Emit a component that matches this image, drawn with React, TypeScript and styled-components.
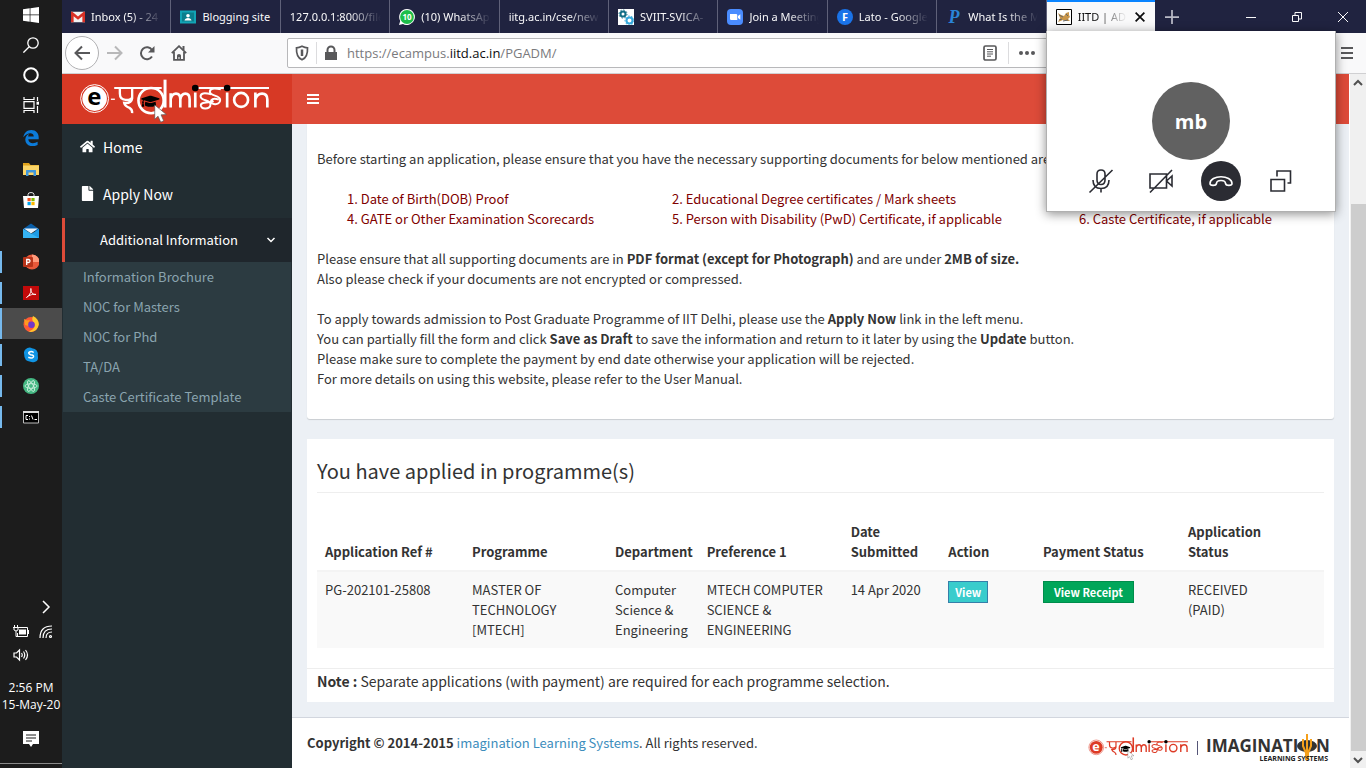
import React from 'react';
import styled, { createGlobalStyle, css } from 'styled-components';
import { FaFile, FaHome, FaGraduationCap } from 'react-icons/fa';

const siteFont = '"Noto Sans CJK SC", "Noto Sans", sans-serif';
const chromeFont = '"Open Sans", "Noto Sans", sans-serif';

const GlobalStyle = createGlobalStyle`
  *, *::before, *::after { box-sizing: border-box; }
  body { margin: 0; overflow: hidden; font-family: ${chromeFont}; }
  button { font: inherit; color: inherit; margin: 0; padding: 0; border: 0; background: none; }
  a { color: inherit; text-decoration: none; }
  ul, ol { list-style: none; margin: 0; padding: 0; }
  h2, p { margin: 0; font-weight: 400; }
  svg { display: block; flex: none; }
`;

/* ---------- Desktop ---------- */

const Desktop = styled.div`
  display: flex;
  position: relative;
  height: 100vh;
`;

const Taskbar = styled.nav`
  display: flex;
  flex-direction: column;
  flex: none;
  width: 62px;
  padding-bottom: 4px;
  background: #1c1c1c;
  color: #fff;
`;

const TaskGroup = styled.div`
  display: flex;
  flex-direction: column;
  margin-bottom: 2px;
`;

const TaskButton = styled.button<{ $tall?: boolean; $open?: boolean; $active?: boolean }>`
  display: flex;
  align-items: center;
  justify-content: center;
  height: ${p => (p.$tall ? 31 : 30)}px;
  background: ${p => (p.$active ? '#4b4b4b' : 'transparent')};
  ${p =>
    p.$open &&
    css`
      &::before {
        content: '';
        width: 2px;
        height: ${p.$active ? 31 : 22}px;
        margin-right: auto;
        background: #76b9ed;
      }
      svg {
        margin-right: auto;
        margin-left: -2px;
      }
    `}
`;

const Tray = styled.div`
  display: grid;
  grid-template-columns: 1fr 1fr;
  row-gap: 8px;
  margin-top: auto;
  padding: 0 4px 0 9px;
  justify-items: center;
`;

const TrayButton = styled.button<{ $column?: number }>`
  height: 16px;
  ${p => p.$column && `grid-column: ${p.$column};`}
`;

const Clock = styled.button`
  margin: 16px 0;
  font-size: 12px;
  line-height: 17px;
  white-space: nowrap;
`;

const NoticeButton = styled.button`
  display: flex;
  justify-content: center;
  padding: 2px 0 16px;
  border-bottom: 1px solid #8a8a8a;
`;

/* ---------- Browser ---------- */

const Browser = styled.div`
  display: flex;
  flex-direction: column;
  flex: 1;
  min-width: 0;
`;

const TitleBar = styled.div`
  display: flex;
  height: 33px;
  background: #202340;
  color: #f9f9fa;
`;

const TabList = styled.div`
  display: flex;
  flex: 0 1 1093px;
  min-width: 0;
`;

const Tab = styled.div<{ $active?: boolean }>`
  display: flex;
  flex: 1 1 0;
  align-items: center;
  min-width: 0;
  gap: 6px;
  padding: 0 8px 0 9px;
  font-family: "Noto Sans", sans-serif;
  font-size: 11px;
  line-height: 33px;
  color: ${p => (p.$active ? '#0c0c0d' : '#f9f9fa')};
  background: ${p => (p.$active ? '#f9f9fa' : 'transparent')};
  box-shadow: ${p => (p.$active ? 'inset 0 2px #0a84ff' : 'none')};
  border-right: ${p => (p.$active ? 0 : 1)}px solid #5f6179;
`;

const TabTitle = styled.span<{ $full?: boolean }>`
  flex: 1;
  min-width: 0;
  overflow: hidden;
  white-space: nowrap;
  ${p => !p.$full && 'mask-image: linear-gradient(to left, transparent, #000 32px);'}
`;

const NewTab = styled.button`
  display: grid;
  place-items: center;
  width: 34px;
  color: #b9bac6;
`;

const WindowButtons = styled.div`
  display: flex;
  margin-left: auto;
`;

const WindowButton = styled.button`
  display: grid;
  place-items: center;
  width: 46px;
`;

const Toolbar = styled.div`
  display: flex;
  align-items: center;
  height: 41px;
  padding: 0 13px 0 3px;
  background: #f9f9fa;
  border-bottom: 1px solid #d0d0d2;
  color: #58585a;
`;

const ToolButton = styled.button<{ $faded?: boolean }>`
  display: grid;
  place-items: center;
  width: 32px;
  height: 32px;
  opacity: ${p => (p.$faded ? 0.4 : 1)};
`;

const BackButton = styled(ToolButton)`
  width: 34px;
  height: 34px;
  border: 1px solid #b1b1b3;
  border-radius: 50%;
  background: #fff;
`;

const UrlBar = styled.div`
  display: flex;
  flex: 1;
  align-items: center;
  height: 30px;
  margin: 0 8px 0 92px;
  padding: 0 6px;
  border: 1px solid #b8b8ba;
  border-radius: 2px;
  background: #fff;
`;

const Divider = styled.i`
  width: 1px;
  height: 22px;
  margin: 0 6px;
  background: #dcdcde;
`;

const Url = styled.span`
  flex: 1;
  margin-left: 8px;
  font-size: 13px;
  color: #7a7a7d;
  b { font-weight: 400; color: #0c0c0d; }
`;

const UrlActions = styled.div`
  display: flex;
  align-items: center;
  gap: 4px;
  width: 344px;
`;

/* ---------- Page ---------- */

const Viewport = styled.div`
  display: flex;
  flex: 1;
  min-height: 0;
  font-family: ${siteFont};
  font-size: 13px;
  line-height: 20px;
  color: #333;
`;

const Site = styled.div`
  display: grid;
  grid-template-columns: 230px 1fr;
  grid-template-rows: 50px 1fr;
  flex: 1;
  min-width: 0;
`;

const Brand = styled.a`
  display: flex;
  align-items: center;
  padding: 2px 0 0 17px;
  background: #d73925;
`;

const Navbar = styled.header`
  display: flex;
  align-items: center;
  padding: 0 15px;
  background: #dd4b39;
  color: #fff;
`;

const Sidebar = styled.nav`
  background: #222d32;
  color: #fff;
`;

const MenuLink = styled.a`
  display: flex;
  align-items: center;
  gap: 8px;
  height: 47px;
  padding: 0 18px 2px;
  font-size: 14px;
`;

const MenuToggle = styled.button`
  display: flex;
  align-items: center;
  justify-content: space-between;
  width: 100%;
  height: 44px;
  padding: 0 16px 0 35px;
  border-left: 3px solid #dd4b39;
  background: #1f262c;
`;

const SubMenu = styled.ul`
  margin: 0 1px;
  background: #2c3b41;
`;

const SubLink = styled.a`
  display: block;
  padding: 5px 20px;
  color: #8aa4af;
`;

const Main = styled.div`
  display: flex;
  flex-direction: column;
  min-width: 0;
  background: #ecf0f5;
`;

const Cards = styled.main`
  display: flex;
  flex-direction: column;
  flex: 1;
  gap: 20px;
  padding: 0 15px 15px;
`;

const Instructions = styled.section`
  display: flex;
  flex-direction: column;
  gap: 20px;
  padding: 25px 10px 30px;
  border-radius: 0 0 3px 3px;
  background: #fff;
  box-shadow: 0 1px 1px rgba(0, 0, 0, 0.15);
`;

const DocumentList = styled.ol`
  display: grid;
  grid-template-columns: 325fr 407fr 245fr;
  padding-left: 30px;
  color: #800000;
`;

const DocumentItem = styled.li<{ $column: number }>`
  grid-column: ${p => p.$column};
  white-space: nowrap;
`;

const Applications = styled.section`
  padding-top: 20px;
  background: #fff;
`;

const CardBody = styled.div`
  padding: 0 10px;
`;

const CardTitle = styled.h2`
  margin-bottom: 21px;
  padding-bottom: 9px;
  border-bottom: 1px solid #eee;
  font-size: 20px;
  line-height: 24px;
`;

const Table = styled.table`
  width: 100%;
  table-layout: fixed;
  border-collapse: collapse;
`;

const Th = styled.th<{ $share: number }>`
  width: ${p => p.$share}%;
  padding: 8px 4px 8px 8px;
  border-bottom: 2px solid #f4f4f4;
  text-align: left;
  vertical-align: bottom;
`;

const Td = styled.td`
  padding: 8px 4px 8px 8px;
  background: #f9f9f9;
  vertical-align: top;
`;

const ActionButton = styled.button<{ $receipt?: boolean }>`
  display: block;
  height: 22px;
  margin-top: 1px;
  padding: 0 ${p => (p.$receipt ? 10 : 6)}px;
  border: 1px solid ${p => (p.$receipt ? '#008d4c' : '#367fa9')};
  background: ${p => (p.$receipt ? '#00a65a' : '#39cccc')};
  color: #fff;
  font-size: 11px;
  font-weight: 700;
  line-height: 20px;
`;

const Note = styled.p`
  margin-top: 20px;
  padding: 2px 10px 11px;
  border-top: 1px solid #eee;
  font-size: 14px;
`;

const Footer = styled.footer`
  display: flex;
  align-items: center;
  justify-content: space-between;
  height: 51px;
  padding: 0 19px 0 15px;
  border-top: 1px solid #d2d6de;
  background: #fff;
`;

const FooterLink = styled.a`
  color: #3c8dbc;
`;

const FooterLogos = styled.div`
  display: flex;
  align-items: center;
  gap: 8px;
  padding-top: 10px;
`;

const LogoRule = styled.i`
  width: 1px;
  height: 14px;
  background: #557;
`;

const ScrollTrack = styled.div`
  display: flex;
  flex-direction: column;
  flex: none;
  align-items: center;
  width: 17px;
  background: #f0f0f0;
  border-left: 1px solid #fff;
  color: #505050;
`;

const ScrollArrow = styled.button`
  display: grid;
  place-items: center;
  width: 100%;
  height: 17px;
`;

const ScrollSpace = styled.div`
  flex: 113;
`;

const ScrollThumb = styled.div`
  flex: 547;
  width: 15px;
  background: #cdcdcd;
`;

/* ---------- Call window ---------- */

const CallWindow = styled.aside`
  display: flex;
  flex-direction: column;
  align-items: center;
  position: absolute;
  top: 31px;
  right: 30px;
  width: 290px;
  height: 181px;
  padding: 51px 25px 0;
  border: 1px solid #b0b0b0;
  border-top: 0;
  background: #fff;
  box-shadow: 0 2px 10px rgba(0, 0, 0, 0.45);
`;

const Avatar = styled.div`
  display: grid;
  place-items: center;
  width: 78px;
  height: 78px;
  border-radius: 50%;
  background: #616161;
  color: #fff;
  font-size: 20px;
  font-weight: 700;
`;

const CallControls = styled.div`
  display: grid;
  grid-template-columns: repeat(4, 60px);
  justify-items: center;
  margin-top: 1px;
`;

const CallButton = styled.button<{ $filled?: boolean }>`
  display: grid;
  place-items: center;
  width: 40px;
  height: 40px;
  border-radius: 50%;
  color: ${p => (p.$filled ? '#fff' : '#2b2c33')};
  background: ${p => (p.$filled ? '#2b2c33' : 'transparent')};
`;

/* ---------- Drawings ---------- */

type IconProps = { size?: number; box?: number; children: React.ReactNode; stroke?: number };

const Icon = ({ size = 16, box = 16, stroke, children }: IconProps) => (
  <svg
    width={size}
    height={size}
    viewBox={`0 0 ${box} ${box}`}
    fill={stroke ? 'none' : 'currentColor'}
    stroke={stroke ? 'currentColor' : 'none'}
    strokeWidth={stroke}
    aria-hidden="true"
  >
    {children}
  </svg>
);

const AdmissionLogo = ({ width, reversed }: { width: number; reversed?: boolean }) => {
  const ink = reversed ? '#fff' : '#dd3b26';
  const inner = reversed ? '#000' : '#fff';
  return (
    <svg width={width} viewBox="26 10 578 140" role="img" aria-label="e-admission">
      <circle cx="73" cy="75" r="42" fill="none" stroke={ink} strokeWidth="3" />
      <circle cx="73" cy="75" r="37" fill={ink} />
      <text x="72" y="94" fontSize="72" fontWeight="700" textAnchor="middle" fill={inner} fontFamily="Open Sans, sans-serif">e</text>
      <path d="M122 77h12" stroke={ink} strokeWidth="4" />
      <g fill="none" stroke={ink} strokeWidth="8">
        <path d="M132 43H275M385 43H598" strokeWidth="6" />
        <path d="M149 44V60Q149 78 166 79Q184 80 186 70M186 44V74Q184 90 162 88Q164 97 178 103Q187 108 186 119" strokeWidth="7" />
        <circle cx="243" cy="81" r="38" />
        <path d="M285 18V102" strokeWidth="9" />
        <path d="M302 102V59M302 76Q306 60 318 60Q331 60 331 77V102M331 77Q334 60 346 60Q359 60 359 77V102" />
        <path d="M376 57V102M472 57V102" />
        <path d="M424 62Q392 54 392 68C392 84 422 76 422 92C422 111 388 107 393 93C398 83 415 91 431 82M453 47Q420 40 420 54C420 70 451 62 451 79C451 98 418 94 424 80Q430 72 447 78" strokeWidth="6" />
        <ellipse cx="514" cy="79" rx="21" ry="21" />
        <path d="M557 102V57M557 77Q562 60 577 60Q593 60 593 78V102" />
      </g>
      <circle cx="376" cy="43" r="10" />
      <circle cx="472" cy="43" r="10" />
      <g transform="translate(213 55)"><FaGraduationCap size={56} color="#000" /></g>
      <path d="M254 94V137L264 128L272 146L281 142L273 124L289 123Z" fill="#fff" stroke="#555" strokeWidth="2" />
    </svg>
  );
};

const ImaginationLogo = () => (
  <svg width="124" height="29" viewBox="0 0 124 29" role="img" aria-label="Imagination Learning Systems" fontFamily="Open Sans, sans-serif" fontWeight="700">
    <text x="0" y="18" fontSize="17" fill="#333">IMAGINATI</text>
    <ellipse cx="101" cy="12" rx="10" ry="6" fill="#333" />
    <path d="M97 5V12L100 19V25H102V19L105 12V5M101 0V19" fill="none" stroke="#f5a01b" strokeWidth="2" />
    <text x="110" y="18" fontSize="17" fill="#333">N</text>
    <text x="122" y="27" fontSize="7" textAnchor="end" fill="#222">LEARNING SYSTEMS</text>
  </svg>
);

const icons = {
  windows: <Icon><path d="M0 2.3 6.7 1.3V7.6H0ZM7.4 1.2 16 0V7.6H7.4ZM0 8.3H6.7V14.7L0 13.8ZM7.4 8.3H16V16L7.4 14.8Z" /></Icon>,
  search: <Icon stroke={1.3}><circle cx="10" cy="6" r="5.2" /><path d="M6.2 9.8.4 15.6" /></Icon>,
  cortana: <Icon stroke={2}><circle cx="8" cy="8" r="6.8" /></Icon>,
  taskView: <Icon stroke={1.2}><path d="M1 0V2.5H11V0M1 16V13.5H11V16M1 4.6H11V11.4H1ZM14.5 0V4M14.5 9V16" /><path d="M13.5 6.2H16" strokeWidth="3" /></Icon>,
  edge: <Icon><path fill="#0c7bd9" d="M.3 7.2C1 2.8 4.2 0 8.3 0 13 0 15.7 3.300 15.700 7.300V9.200H5.300C5.500 14 11.300 14 14.600 11.800V15C8.800 18 1.900 15.400 2.300 9.300 2.500 6.600 4 4.800 6 4 5.400 4.800 5.300 5.600 5.200 6.400H10.700C10.900 2.300 4.800 1.600.3 7.200Z" /></Icon>,
  folder: <Icon><path fill="#e0a21b" d="M0 2H6L7.500 4H16V6H0Z" /><path fill="#fbd568" d="M0 4.500H16V14H0Z" /><path fill="#3e96db" d="M3 15V9.500Q3 9 3.500 9H12.500Q13 9 13 9.500V15H10.500V11.500H5.500V15Z" /></Icon>,
  store: <Icon><path d="M5 4V2.500Q5 .5 8 .5 11 .5 11 2.500V4" fill="none" stroke="#ddd" /><path fill="#fff" d="M0 4H16L15 16H1Z" /><path fill="#f25022" d="M4.500 6H7.700V9.200H4.500Z" /><path fill="#7fba00" d="M8.400 6H11.600V9.200H8.400Z" /><path fill="#00a4ef" d="M4.500 10H7.700V13.200H4.500Z" /><path fill="#ffb900" d="M8.400 10H11.600V13.200H8.400Z" /></Icon>,
  mail: <Icon><path fill="#0a5ea8" d="M0 6 8 .5 16 6V8H0Z" /><path fill="#1c9be6" d="M0 6V15H16V6L8 11Z" /><path fill="#e8f3fb" d="M1 5.500H15L8 10.500Z" /><path fill="#35b4f4" d="M0 6 16 15H0Z" /></Icon>,
  powerpoint: <Icon><circle cx="9" cy="8" r="7.500" fill="#e8593a" /><path d="M9 .5A7.500 7.500 0 0 1 16.500 8H9Z" fill="#ff9a7b" /><rect y="3" width="10" height="10" rx="1" fill="#b9341a" /><path d="M3.700 11V5.500H5.500Q7 5.500 7 7T5.500 8.500H3.700" fill="none" stroke="#fff" strokeWidth="1.300" /></Icon>,
  acrobat: <Icon><path fill="#c20a0a" d="M0 1H16V15H0Z" /><path d="M3.500 12.500C7.500 10 8.500 5 8 3.500 7 3 8 10.500 13 9.500 11 8.500 6 10 3.500 12.500Z" fill="none" stroke="#fff" strokeWidth=".9" /></Icon>,
  firefox: <Icon><circle cx="8" cy="8.500" r="7.500" fill="#ff5a36" /><path fill="#ffc72c" d="M10 0C14 2 16 5 15.800 8.500 15 14 10 17 5.500 15.500 12 14 13 8 10 5.500 9 4 9 2 10 0Z" /><path fill="#ff9b20" d="M1 3 4 4.500 7 4 5 7 8 8 6 10 2 9Z" /><circle cx="8.500" cy="8.800" r="3.300" fill="#7138c9" /></Icon>,
  skype: <Icon><path fill="#1094e4" d="M4.500 1Q7 0 9 1.200 15.500 2 14.800 8.500 16 14 11.500 15 9 15.500 7.500 14.700 1 14 1.200 7.500 0 3 4.500 1Z" /><path d="M10.700 5.500Q8.500 4 6.500 5T7.500 7.700Q11 8 10.500 9.800 9 12 5.300 10.300" fill="none" stroke="#fff" strokeWidth="1.500" /></Icon>,
  atom: <Icon><circle cx="8" cy="8" r="8" fill="#45b883" /><g fill="none" stroke="#d5f3e4" strokeWidth=".8"><ellipse cx="8" cy="8" rx="6" ry="2.300" /><ellipse cx="8" cy="8" rx="6" ry="2.300" transform="rotate(60 8 8)" /><ellipse cx="8" cy="8" rx="6" ry="2.300" transform="rotate(120 8 8)" /></g></Icon>,
  terminal: <Icon><path d="M.5 2.500H15.500V14H.5Z" fill="#000" stroke="#bbb" /><path d="M0 2H16V4H0Z" fill="#ddd" /><path d="M5 6.500H3V10.500H5M6.500 7V8M6.500 9.500V10.500M8.500 6.500 10 10.500M11.500 10.500H14" fill="none" stroke="#fff" /></Icon>,
  chevronRight: <Icon stroke={1.500}><path d="M5 2 11 8 5 14" /></Icon>,
  battery: <Icon><path d="M6 6.500H13V11.500H6Z" /><path d="M6 4.500H14.500V13.500H4.500V10M15.500 7V11" fill="none" stroke="currentColor" /><path d="M1.500 2V4.500M4.500 2V4.500M0 4.500H6M1 5V7Q3 9 5 7V5M3 8V13.500H5" fill="none" stroke="currentColor" /></Icon>,
  wifi: <Icon stroke={1.200}><path d="M2 15Q2 3 14 3M5 15Q5 6 14 6M8 15Q8 9 14 9" /><circle cx="12.500" cy="13.500" r="1" /></Icon>,
  volume: <Icon stroke={1.200}><path d="M1 6H3.500L6.500 3V13L3.500 10H1ZM8.500 6Q10 8 8.500 10M10.500 4.500Q13 8 10.500 11.500M12.500 3Q16.500 8 12.500 13" /></Icon>,
  notice: <Icon><path fill="#fff" d="M0 0H16V13H10L8 16 6 13H0Z" /><path d="M3 4H13M3 7H13M3 10H9" stroke="#1c1c1c" /></Icon>,
  gmail: <Icon size={14}><path fill="#f2f2f2" d="M0 2H16V14H0Z" /><path fill="#d93025" d="M0 14V2H1.500L8 7.500 14.500 2H16V14H13V7L8 11 3 7V14Z" /></Icon>,
  classroom: <Icon><path fill="#12a4b5" d="M0 1.500H16V14.500H0Z" /><path fill="#0b7e8d" d="M2 3.500H14V12.500H2Z" /><path fill="#fff" d="M4.500 11.500Q5 9 8 9T11.500 11.500Z" /><circle cx="8" cy="6.700" r="1.800" fill="#fff" /></Icon>,
  whatsapp: <Icon><path fill="#fff" d="M8 0A8 8 0 1 1 4 15L0 16 1.200 12A8 8 0 0 1 8 0Z" /><circle cx="8" cy="8" r="6.900" fill="#1ebe4a" /><text x="8" y="11" fontSize="8" fontWeight="700" textAnchor="middle" fill="#fff">10</text></Icon>,
  gears: <Icon><path fill="#fff" d="M0 0H16V16H0Z" /><circle cx="5" cy="5" r="2.500" fill="none" stroke="#126e86" strokeWidth="2" /><circle cx="5" cy="5" r="4" fill="none" stroke="#126e86" strokeDasharray="1.500 1.600" /><circle cx="11.500" cy="11.500" r="3" fill="none" stroke="#35a8dc" strokeWidth="2" /><circle cx="11.500" cy="11.500" r="4.500" fill="none" stroke="#35a8dc" strokeDasharray="1.600 1.600" /></Icon>,
  zoom: <Icon><rect width="16" height="16" rx="4" fill="#4a8cff" /><path fill="#fff" d="M3 5H9Q10.300 5 10.300 6.300V11H4.300Q3 11 3 9.700ZM11 7 13.300 5.300V10.700L11 9Z" /></Icon>,
  fonts: <Icon><circle cx="8" cy="8" r="8" fill="#1a73e8" /><text x="8" y="12" fontSize="11" fontWeight="700" textAnchor="middle" fill="#fff">F</text></Icon>,
  pLetter: <Icon><text x="8" y="14" fontSize="18" fontWeight="700" fontStyle="italic" textAnchor="middle" fill="#2a84d8" fontFamily="Liberation Serif, serif">P</text></Icon>,
  tiger: <Icon><path fill="#fff" stroke="#000" d="M.5.5H15.500V15.500H.5Z" /><path fill="#c9964a" d="M2 4 5 6 8 7 10 4 13 3 13 6 14 8 12 10 14 12 10 12 7 11 2 13 4 9Z" /><path d="M3 6 7 8M3 11 6 10M7 12 12 11M10 5 12 7" stroke="#666" /></Icon>,
};

const openTabs = [
  { icon: icons.gmail, title: 'Inbox (5) - 24' },
  { icon: icons.classroom, title: 'Blogging site', full: true },
  { title: '127.0.0.1:8000/file' },
  { icon: icons.whatsapp, title: '(10) WhatsApp' },
  { title: 'iitg.ac.in/cse/new' },
  { icon: icons.gears, title: 'SVIIT-SVICA-' },
  { icon: icons.zoom, title: 'Join a Meeting' },
  { icon: icons.fonts, title: 'Lato - Google' },
  { icon: icons.pLetter, title: 'What Is the M' },
];

const apps = [
  { name: 'Edge', icon: icons.edge },
  { name: 'File Explorer', icon: icons.folder },
  { name: 'Store', icon: icons.store },
  { name: 'Mail', icon: icons.mail },
  { name: 'PowerPoint', icon: icons.powerpoint, open: true },
  { name: 'Acrobat', icon: icons.acrobat, open: true },
  { name: 'Firefox', icon: icons.firefox, open: true, active: true },
  { name: 'Skype', icon: icons.skype, open: true },
  { name: 'Atom', icon: icons.atom, open: true },
  { name: 'Command Prompt', icon: icons.terminal, open: true },
];

const WindowsTaskbar = () => (
  <Taskbar aria-label="Taskbar">
    <TaskGroup>
      <TaskButton aria-label="Start">{icons.windows}</TaskButton>
      <TaskButton aria-label="Search">{icons.search}</TaskButton>
      <TaskButton aria-label="Cortana">{icons.cortana}</TaskButton>
      <TaskButton aria-label="Task view">{icons.taskView}</TaskButton>
    </TaskGroup>
    <TaskGroup>
      {apps.map(app => (
        <TaskButton key={app.name} aria-label={app.name} $tall $open={app.open} $active={app.active}>
          {app.icon}
        </TaskButton>
      ))}
    </TaskGroup>
    <Tray>
      <TrayButton $column={2} aria-label="Hidden icons">{icons.chevronRight}</TrayButton>
      <TrayButton aria-label="Battery">{icons.battery}</TrayButton>
      <TrayButton aria-label="Network">{icons.wifi}</TrayButton>
      <TrayButton aria-label="Volume">{icons.volume}</TrayButton>
    </Tray>
    <Clock>2:56 PM<br />15-May-20</Clock>
    <NoticeButton aria-label="Notifications">{icons.notice}</NoticeButton>
  </Taskbar>
);

const BrowserChrome = () => (
  <>
    <TitleBar>
      <TabList role="tablist">
        {openTabs.map(tab => (
          <Tab key={tab.title} role="tab">
            {tab.icon}
            <TabTitle $full={tab.full}>{tab.title}</TabTitle>
          </Tab>
        ))}
        <Tab role="tab" aria-selected="true" $active>
          {icons.tiger}
          <TabTitle>IITD | ADM</TabTitle>
          <button aria-label="Close tab"><Icon size={14} stroke={2}><path d="M3 3 13 13M13 3 3 13" /></Icon></button>
        </Tab>
      </TabList>
      <NewTab aria-label="New tab"><Icon size={14} stroke={2}><path d="M8 0V16M0 8H16" /></Icon></NewTab>
      <WindowButtons>
        <WindowButton aria-label="Minimize"><Icon size={10} box={10} stroke={1}><path d="M0 5.500H10" /></Icon></WindowButton>
        <WindowButton aria-label="Restore"><Icon size={10} box={10} stroke={1}><path d="M.5 3.500H6.500V9.500H.5ZM3 3.500V.5H9.500V7H6.500" /></Icon></WindowButton>
        <WindowButton aria-label="Close"><Icon size={10} box={10} stroke={1}><path d="M0 0 10 10M10 0 0 10" /></Icon></WindowButton>
      </WindowButtons>
    </TitleBar>
    <Toolbar>
      <BackButton aria-label="Back"><Icon stroke={2}><path d="M16 8H1.500M8 1.500 1.500 8 8 14.500" /></Icon></BackButton>
      <ToolButton aria-label="Forward" $faded><Icon stroke={2}><path d="M0 8H14.500M8 1.500 14.500 8 8 14.500" /></Icon></ToolButton>
      <ToolButton aria-label="Reload"><Icon><path d="M13 11.500A6 6 0 1 1 13 5" fill="none" stroke="currentColor" strokeWidth="2" /><path d="M15.500 1V7.500H9Z" /></Icon></ToolButton>
      <ToolButton aria-label="Home"><Icon><path d="M.8 8.200 8 1.200 15.200 8.200M3 7V14.800H13V7" fill="none" stroke="currentColor" strokeWidth="1.800" /><path d="M6 15V10.500Q6 9 8 9T10 10.500V15H8.500V12H7.500V15ZM11.500 1H13.500V5H11.500Z" /></Icon></ToolButton>
      <UrlBar>
        <Icon stroke={1.700}><path d="M8 1.300Q11 2.800 13.500 2.800 14 12.500 8 14.800 2 12.500 2.500 2.800 5 2.800 8 1.300Z" /><path d="M8 4.500V11" strokeWidth="2.500" /></Icon>
        <Divider />
        <Icon><path d="M2 7H14V15H2Z" /><path d="M4.500 8V5A3.500 3.500 0 0 1 11.500 5V8" fill="none" stroke="currentColor" strokeWidth="2" /></Icon>
        <Url>https://ecampus.<b>iitd.ac.in</b>/PGADM/</Url>
        <UrlActions>
          <Icon stroke={1.700}><rect x="2" y="1" width="12" height="14" rx="1.500" /><path d="M5 4.500H11M5 6.800H11M5 9H11M5 11.200H9" strokeWidth="1" /></Icon>
          <Divider />
          <Icon><circle cx="2" cy="8" r="2" /><circle cx="8" cy="8" r="2" /><circle cx="14" cy="8" r="2" /></Icon>
        </UrlActions>
      </UrlBar>
      <button aria-label="Menu"><Icon size={12} box={12} stroke={2}><path d="M0 1H12M0 6H12M0 11H12" /></Icon></button>
    </Toolbar>
  </>
);

const SiteSidebar = () => (
  <Sidebar>
    <MenuLink href="#home"><FaHome size={15} />Home</MenuLink>
    <MenuLink href="#apply"><FaFile size={15} />Apply Now</MenuLink>
    <MenuToggle aria-expanded="true">
      Additional Information
      <Icon size={10} box={10} stroke={1.500}><path d="M1.500 3 5 6.500 8.500 3" /></Icon>
    </MenuToggle>
    <SubMenu>
      {['Information Brochure', 'NOC for Masters', 'NOC for Phd', 'TA/DA', 'Caste Certificate Template'].map(name => (
        <li key={name}><SubLink href="#info">{name}</SubLink></li>
      ))}
    </SubMenu>
  </Sidebar>
);

const InstructionCard = () => (
  <Instructions>
    <p>Before starting an application, please ensure that you have the necessary supporting documents for below mentioned areas of</p>
    <DocumentList>
      <DocumentItem $column={1}>1. Date of Birth(DOB) Proof</DocumentItem>
      <DocumentItem $column={2}>2. Educational Degree certificates / Mark sheets</DocumentItem>
      <DocumentItem $column={1}>4. GATE or Other Examination Scorecards</DocumentItem>
      <DocumentItem $column={2}>5. Person with Disability (PwD) Certificate, if applicable</DocumentItem>
      <DocumentItem $column={3}>6. Caste Certificate, if applicable</DocumentItem>
    </DocumentList>
    <p>
      Please ensure that all supporting documents are in <b>PDF format (except for Photograph)</b> and are under <b>2MB of size.</b><br />
      Also please check if your documents are not encrypted or compressed.
    </p>
    <p>
      To apply towards admission to Post Graduate Programme of IIT Delhi, please use the <b>Apply Now</b> link in the left menu.<br />
      You can partially fill the form and click <b>Save as Draft</b> to save the information and return to it later by using the <b>Update</b> button.<br />
      Please make sure to complete the payment by end date otherwise your application will be rejected.<br />
      For more details on using this website, please refer to the User Manual.
    </p>
  </Instructions>
);

const ApplicationCard = () => (
  <Applications>
    <CardBody>
      <CardTitle>You have applied in programme(s)</CardTitle>
      <Table>
        <thead>
          <tr>
            <Th $share={14.6}>Application Ref #</Th>
            <Th $share={14.2}>Programme</Th>
            <Th $share={9.1}>Department</Th>
            <Th $share={14.3}>Preference 1</Th>
            <Th $share={9.7}>Date<br />Submitted</Th>
            <Th $share={9.4}>Action</Th>
            <Th $share={14.4}>Payment Status</Th>
            <Th $share={14.3}>Application<br />Status</Th>
          </tr>
        </thead>
        <tbody>
          <tr>
            <Td>PG-202101-25808</Td>
            <Td>MASTER OF TECHNOLOGY [MTECH]</Td>
            <Td>Computer Science &amp; Engineering</Td>
            <Td>MTECH COMPUTER SCIENCE &amp; ENGINEERING</Td>
            <Td>14 Apr 2020</Td>
            <Td><ActionButton>View</ActionButton></Td>
            <Td><ActionButton $receipt>View Receipt</ActionButton></Td>
            <Td>RECEIVED<br />(PAID)</Td>
          </tr>
        </tbody>
      </Table>
    </CardBody>
    <Note><b>Note :</b> Separate applications (with payment) are required for each programme selection.</Note>
  </Applications>
);

const Call = () => (
  <CallWindow aria-label="Call">
    <Avatar>mb</Avatar>
    <CallControls>
      <CallButton aria-label="Unmute">
        <Icon size={26} box={26} stroke={1.600}><path d="M9 6Q9 2 13 2T17 6V12Q17 16.500 13 16.500T9 12ZM5 12Q5 20.500 13 20.500T21 12M13 20.500V24.500M24.500 2 1.500 24.500" /></Icon>
      </CallButton>
      <CallButton aria-label="Turn camera on">
        <Icon size={26} box={26} stroke={1.600}><path d="M2 6H18.500V20H2ZM18.500 13 24 8V18ZM24 2 2 24.500" /></Icon>
      </CallButton>
      <CallButton aria-label="End call" $filled>
        <Icon size={26} box={26} stroke={1.600}><path d="M2 15.500C2 6.500 24 6.500 24 15.500 24 18 18 18 17.500 15.500 17.500 13 16 12.500 13 12.500S8.500 13 8.500 15.500C8 18 2 18 2 15.500Z" /></Icon>
      </CallButton>
      <CallButton aria-label="Pop out">
        <Icon size={26} box={26} stroke={1.600}><path d="M3 11.500H16.500V23H3ZM9 8.500V3H22.500V15H19.500" /></Icon>
      </CallButton>
    </CallControls>
  </CallWindow>
);

export default function App() {
  return (
    <>
      <GlobalStyle />
      <Desktop>
        <WindowsTaskbar />
        <Browser>
          <BrowserChrome />
          <Viewport>
            <Site>
              <Brand href="#home"><AdmissionLogo width={192} reversed /></Brand>
              <Navbar>
                <button aria-label="Toggle navigation">
                  <Icon size={12} box={12} stroke={2}><path d="M0 2H12M0 6H12M0 10H12" /></Icon>
                </button>
              </Navbar>
              <SiteSidebar />
              <Main>
                <Cards>
                  <InstructionCard />
                  <ApplicationCard />
                </Cards>
                <Footer>
                  <span><b>Copyright © 2014-2015</b> <FooterLink href="#company">imagination Learning Systems</FooterLink>. All rights reserved.</span>
                  <FooterLogos>
                    <AdmissionLogo width={101} />
                    <LogoRule />
                    <ImaginationLogo />
                  </FooterLogos>
                </Footer>
              </Main>
            </Site>
            <ScrollTrack aria-hidden="true">
              <ScrollArrow tabIndex={-1}><Icon size={10} box={10} stroke={2}><path d="M1 7 5 3 9 7" /></Icon></ScrollArrow>
              <ScrollSpace />
              <ScrollThumb />
              <ScrollArrow tabIndex={-1}><Icon size={10} box={10} stroke={2}><path d="M1 3 5 7 9 3" /></Icon></ScrollArrow>
            </ScrollTrack>
          </Viewport>
        </Browser>
        <Call />
      </Desktop>
    </>
  );
}
